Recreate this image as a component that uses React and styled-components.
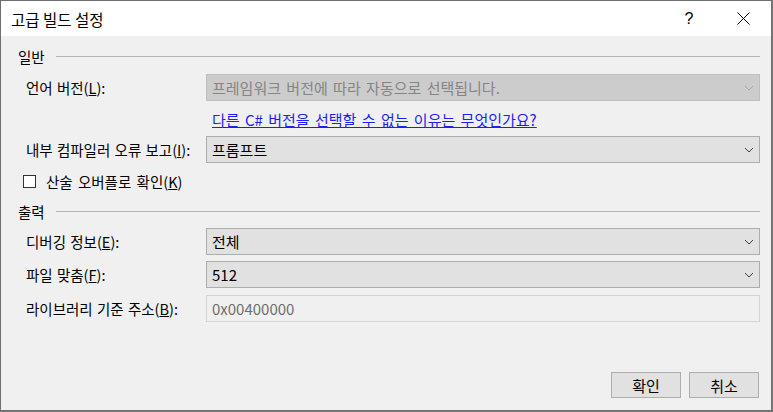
import React from 'react';
import styled, { createGlobalStyle } from 'styled-components';

const GlobalStyle = createGlobalStyle`
  html, body {
    margin: 0;
    padding: 0;
    background: #7a7a7a;
  }
  body {
    font-family: "Noto Sans CJK KR", "Malgun Gothic", sans-serif;
    font-size: 14.5px;
    color: #000;
  }
`;

const Window = styled.div`
  width: 772px;
  height: 411px;
  box-sizing: border-box;
  border: 1px solid #6f6f6f;
  background: #f0f0f0;
  display: flex;
  flex-direction: column;
`;

const TitleBar = styled.div`
  height: 35px;
  background: #fff;
  display: flex;
  align-items: center;
  padding-left: 10px;
  font-size: 15.5px;
`;

const Title = styled.div`
  flex: 1;
`;

const TitleButton = styled.div`
  width: ${(p) => p.$w}px;
  height: 35px;
  display: flex;
  align-items: center;
  justify-content: center;
  font-family: "Liberation Sans", sans-serif;
  font-size: 16px;
`;

const Body = styled.div`
  flex: 1;
  display: flex;
  flex-direction: column;
  padding: 10px 11px 12px 17px;
`;

const SectionHeader = styled.div`
  display: flex;
  align-items: center;
  height: 20px;
  margin-top: ${(p) => p.$mt || 0}px;

  &::after {
    content: '';
    flex: 1;
    margin-left: 11px;
    border-top: 1px solid #b3b3b3;
  }
`;

const Row = styled.div`
  display: grid;
  grid-template-columns: 180px 1fr;
  align-items: center;
  padding-left: 8px;
  margin-top: ${(p) => p.$mt || 0}px;
`;

const Label = styled.div`
  white-space: nowrap;
  word-spacing: 1px;
`;

const Field = styled.div`
  height: 27px;
  box-sizing: border-box;
  display: flex;
  align-items: center;
  padding: 0 5px 0 5px;
  font-size: 15px;
  word-spacing: 2px;
  border: 1px solid
    ${(p) => (p.$variant === 'disabled' ? '#bfbfbf' : p.$variant === 'text' ? '#d4d4d4' : '#adadad')};
  background: ${(p) =>
    p.$variant === 'disabled' ? '#cccccc' : p.$variant === 'text' ? '#f0f0f0' : '#e1e1e1'};
  color: ${(p) => (p.$variant === 'disabled' ? '#858585' : p.$variant === 'text' ? '#6d6d6d' : '#000')};
`;

const FieldText = styled.span`
  flex: 1;
  white-space: nowrap;
  overflow: hidden;
`;

const LinkRow = styled.div`
  padding-left: 194px;
  margin-top: ${(p) => p.$mt || 0}px;
  height: 20px;
  display: flex;
  align-items: center;
`;

const HelpLink = styled.a`
  color: #1e1ef5;
  font-size: 15px;
  word-spacing: 2px;
  text-decoration: underline;
  white-space: nowrap;
`;

const CheckRow = styled.label`
  display: flex;
  align-items: center;
  gap: 10px;
  padding-left: 5px;
  height: 20px;
  word-spacing: 2px;
  margin-top: ${(p) => p.$mt || 0}px;
`;

const CheckBox = styled.span`
  width: 13px;
  height: 13px;
  box-sizing: border-box;
  border: 1px solid #333;
  background: #fff;
`;

const Footer = styled.div`
  margin-top: auto;
  display: flex;
  justify-content: flex-end;
  gap: 8px;
  padding-right: 1px;
`;

const Button = styled.button`
  width: 70px;
  height: 26px;
  box-sizing: border-box;
  border: 1px solid #adadad;
  background: #e1e1e1;
  font-family: inherit;
  font-size: 15px;
  color: #000;
  padding: 0;
`;

function Chevron({ disabled }) {
  return (
    <svg width="10" height="6" viewBox="0 0 10 6">
      <path d="M1 1 L5 5 L9 1" fill="none" stroke={disabled ? '#a8a8a8' : '#404040'} strokeWidth="1" />
    </svg>
  );
}

function CloseIcon() {
  return (
    <svg width="13" height="13" viewBox="0 0 13 13">
      <path d="M0.5 0.5 L12.5 12.5 M12.5 0.5 L0.5 12.5" stroke="#000" strokeWidth="1" />
    </svg>
  );
}

function Combo({ variant, children }) {
  return (
    <Field $variant={variant}>
      <FieldText>{children}</FieldText>
      {variant !== 'text' && <Chevron disabled={variant === 'disabled'} />}
    </Field>
  );
}

export default function App() {
  return (
    <>
      <GlobalStyle />
      <Window>
        <TitleBar>
          <Title>고급 빌드 설정</Title>
          <TitleButton $w={54}>?</TitleButton>
          <TitleButton $w={55}>
            <CloseIcon />
          </TitleButton>
        </TitleBar>
        <Body>
          <SectionHeader>일반</SectionHeader>
          <Row $mt={8}>
            <Label>
              언어 버전(<u>L</u>):
            </Label>
            <Combo variant="disabled">프레임워크 버전에 따라 자동으로 선택됩니다.</Combo>
          </Row>
          <LinkRow $mt={8}>
            <HelpLink>다른 C# 버전을 선택할 수 없는 이유는 무엇인가요?</HelpLink>
          </LinkRow>
          <Row $mt={7}>
            <Label>
              내부 컴파일러 오류 보고(<u>I</u>):
            </Label>
            <Combo>프롬프트</Combo>
          </Row>
          <CheckRow $mt={8}>
            <CheckBox />
            <span>
              산술 오버플로 확인(<u>K</u>)
            </span>
          </CheckRow>
          <SectionHeader $mt={10}>출력</SectionHeader>
          <Row $mt={7}>
            <Label>
              디버깅 정보(<u>E</u>):
            </Label>
            <Combo>전체</Combo>
          </Row>
          <Row $mt={6}>
            <Label>
              파일 맞춤(<u>F</u>):
            </Label>
            <Combo>512</Combo>
          </Row>
          <Row $mt={7}>
            <Label>
              라이브러리 기준 주소(<u>B</u>):
            </Label>
            <Combo variant="text">0x00400000</Combo>
          </Row>
          <Footer>
            <Button>확인</Button>
            <Button>취소</Button>
          </Footer>
        </Body>
      </Window>
    </>
  );
}
